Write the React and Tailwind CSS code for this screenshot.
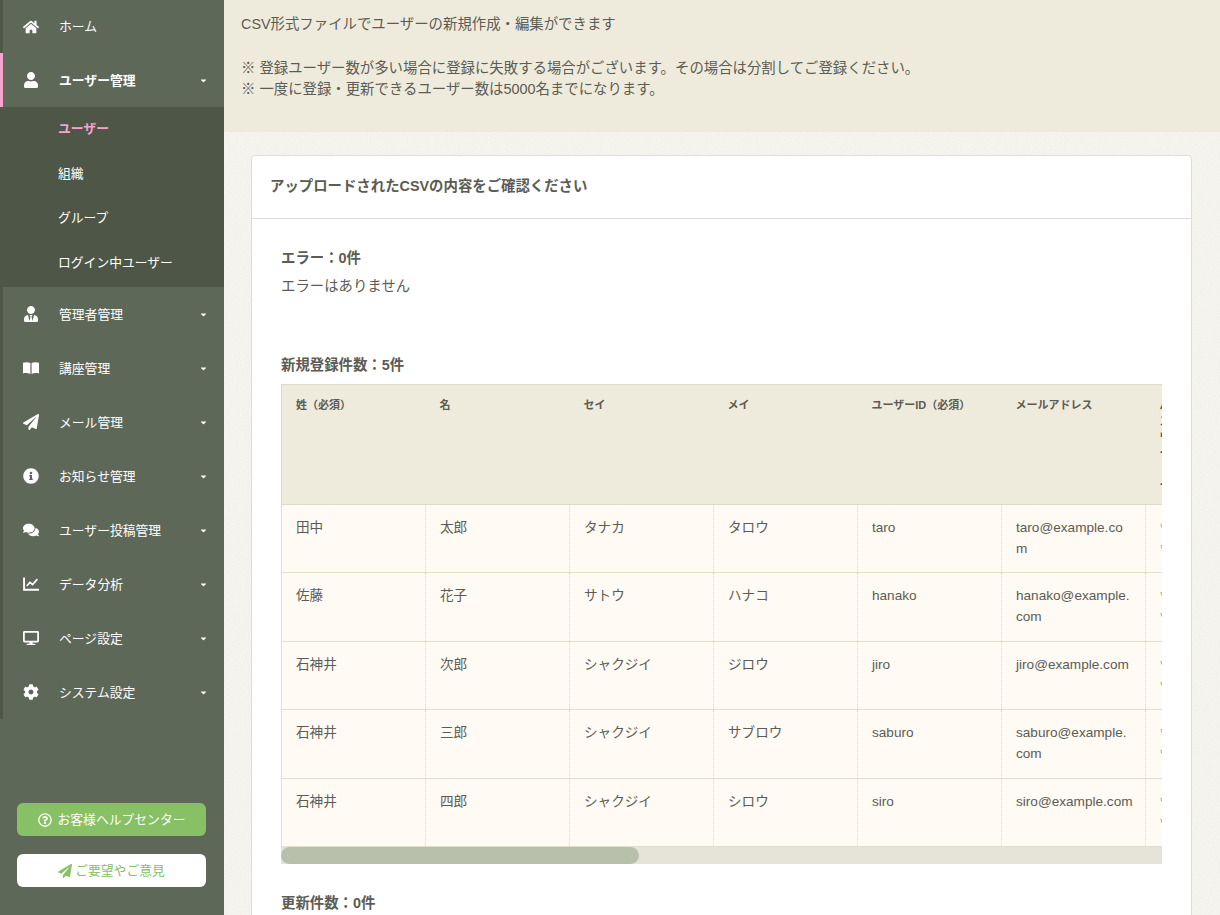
import { FaHome, FaUser, FaUserTie, FaPaperPlane, FaInfoCircle, FaComments, FaDesktop, FaCog, FaCaretDown, FaRegQuestionCircle } from 'react-icons/fa'

function BookIcon({ className }) {
  return (
    <svg viewBox="0 0 16 12" fill="currentColor" className={className}>
      <path d="M0 .8C2.5-.1 5.5 0 7.4 1v11c-2-1-4.9-1.200-7.400-.5z" />
      <path d="M16 .8C13.500-.1 10.500 0 8.600 1v11c2-1 4.900-1.200 7.400-.5z" />
    </svg>
  )
}

function ChartIcon({ className }) {
  return (
    <svg viewBox="0 0 15 13" fill="none" stroke="currentColor" className={className}>
      <path d="M1 .5V12h14" strokeWidth="1.8" />
      <path d="M3.500 8.500l3-3.500 2.500 2 4.500-5" strokeWidth="1.600" />
    </svg>
  )
}

const subMenu = ['ユーザー', '組織', 'グループ', 'ログイン中ユーザー']
const menuAfter = [
  { label: '管理者管理', icon: FaUserTie },
  { label: '講座管理', icon: BookIcon },
  { label: 'メール管理', icon: FaPaperPlane },
  { label: 'お知らせ管理', icon: FaInfoCircle },
  { label: 'ユーザー投稿管理', icon: FaComments },
  { label: 'データ分析', icon: ChartIcon },
  { label: 'ページ設定', icon: FaDesktop },
  { label: 'システム設定', icon: FaCog },
]

const columns = ['姓（必須）', '名', 'セイ', 'メイ', 'ユーザーID（必須）', 'メールアドレス']
const users = [
  ['田中', '太郎', 'タナカ', 'タロウ', 'taro', 'taro@example.com'],
  ['佐藤', '花子', 'サトウ', 'ハナコ', 'hanako', 'hanako@example.com'],
  ['石神井', '次郎', 'シャクジイ', 'ジロウ', 'jiro', 'jiro@example.com'],
  ['石神井', '三郎', 'シャクジイ', 'サブロウ', 'saburo', 'saburo@example.com'],
  ['石神井', '四郎', 'シャクジイ', 'シロウ', 'siro', 'siro@example.com'],
]

function MenuItem({ icon: Icon, label, active, caret = true, height = 'h-[54px]' }) {
  return (
    <div className={`flex items-center text-white ${height}`}>
      <span className="flex w-[56px] shrink-0 justify-center">
        <Icon className="w-[16px] text-[16px]" />
      </span>
      <span className={`text-[12.8px] ${caret ? 'pt-[2px]' : ''} ${active ? 'font-bold' : ''}`}>{label}</span>
      {caret && <FaCaretDown className="ml-auto mr-[16px] text-[9px]" />}
    </div>
  )
}

export default function App() {
  return (
    <div
      className="flex h-screen overflow-hidden text-[#5c5c54]"
      style={{ fontFamily: '"Liberation Sans", "Noto Sans CJK JP", sans-serif' }}
    >
      {/* Sidebar */}
      <aside className="flex w-[224px] shrink-0 flex-col bg-[#5e6859]">
        <nav className="border-l-[3px] border-[#4e5747]">
          <MenuItem icon={FaHome} label="ホーム" caret={false} height="h-[53px]" />
          <div className="-ml-[3px] border-l-[3px] border-[#f5a3cf]">
            <MenuItem icon={FaUser} label="ユーザー管理" active />
          </div>
          <div className="-ml-[3px] h-[180px] bg-[#4e5747] pl-[58px]">
            {subMenu.map((s, i) => (
              <div
                key={s}
                className={`flex h-[44.75px] items-center pb-[2px] text-[12.8px] ${i === 0 ? 'font-bold text-[#f5a3cf]' : 'text-white'}`}
              >
                {s}
              </div>
            ))}
          </div>
          {menuAfter.map((m) => (
            <MenuItem key={m.label} icon={m.icon} label={m.label} />
          ))}
        </nav>

        <div className="mt-auto flex flex-col gap-[18px] pb-[28px] pl-[17px] pr-[18px]">
          <div className="flex h-[33px] items-center justify-center gap-[6px] rounded-[6px] bg-[#87c065] text-[12.8px] text-white">
            <FaRegQuestionCircle className="text-[14px]" />
            お客様ヘルプセンター
          </div>
          <div className="flex h-[33px] items-center justify-center gap-[3px] rounded-[6px] bg-white text-[12.8px] text-[#87c065]">
            <FaPaperPlane className="text-[14px]" />
            ご要望やご意見
          </div>
        </div>
      </aside>

      {/* Main */}
      <main className="relative min-w-0 flex-1 bg-[#f7f5f0]">
        {/* paper texture */}
        <svg className="absolute inset-0 h-full w-full" aria-hidden="true">
          <filter id="paper">
            <feTurbulence type="fractalNoise" baseFrequency="0.9" numOctaves="2" />
            <feColorMatrix values="0 0 0 0 0.6  0 0 0 0 0.58  0 0 0 0 0.5  0 0 0 0.25 -0.07" />
          </filter>
          <rect width="100%" height="100%" filter="url(#paper)" />
        </svg>

        <div className="relative">
          <div className="h-[132px] bg-[#eeebdc] pl-[17px] pt-[14px] text-[14.4px] leading-[21px]">
            <p>CSV形式ファイルでユーザーの新規作成・編集ができます</p>
            <p className="mt-[23px]">※ 登録ユーザー数が多い場合に登録に失敗する場合がございます。その場合は分割してご登録ください。</p>
            <p>※ 一度に登録・更新できるユーザー数は5000名までになります。</p>
          </div>

          <section className="ml-[27px] mt-[23px] w-[941px] rounded-t-[4px] border border-[#dfddd5] bg-white">
            <h2 className="flex h-[63px] items-center border-b border-[#dfddd5] pl-[18px] text-[14.4px] font-bold">
              アップロードされたCSVの内容をご確認ください
            </h2>

            <div className="px-[29px] pb-[60px] pt-[29px]">
              <p className="text-[14.4px] font-bold leading-[20px]">エラー：0件</p>
              <p className="mt-[8px] text-[14.4px] leading-[21px]">エラーはありません</p>

              <p className="mt-[58px] text-[14.4px] font-bold leading-[20px]">新規登録件数：5件</p>

              <div className="mt-[9px] overflow-hidden">
                <table className="w-[1200px] table-fixed border-collapse">
                  <thead>
                    <tr className="h-[120px] bg-[#eeebdc]">
                      {columns.map((c, i) => (
                        <th
                          key={c}
                          className={`w-[144px] border-y border-[#dedbc8] px-[14px] pt-[12px] text-left align-top text-[11px] font-bold leading-[16px] ${i === 0 ? 'border-l' : ''}`}
                        >
                          {c}
                        </th>
                      ))}
                      <th className="border-y border-[#dedbc8] px-[14px] pt-[12px] text-left align-top text-[11px] font-bold leading-[16px]">
                        パ<br />ス<br />ワ<br />ー<br />ド<br />ー
                      </th>
                    </tr>
                  </thead>
                  <tbody>
                    {users.map((row) => (
                      <tr key={row[4]} className="h-[68.4px] border-b border-[#e3dfcc] bg-[#fffaf3]">
                        {row.map((cell, i) => (
                          <td
                            key={i}
                            className={`break-all border-r border-dotted border-r-[#dcd9cb] pl-[14px] pr-[12.4px] pt-[12px] align-top text-[13.6px] leading-[21px] ${i === 0 ? 'border-l border-l-[#e3dfcc] [border-left-style:solid]' : ''}`}
                          >
                            {cell}
                          </td>
                        ))}
                        <td className="px-[14px] pt-[12px] align-top text-[13.6px] leading-[21px] text-[#a08060]">
                          *<br />*
                        </td>
                      </tr>
                    ))}
                  </tbody>
                </table>
                {/* scrollbar */}
                <div className="h-[17px] bg-[#e6e3d8]">
                  <div className="h-[17px] w-[358px] rounded-full bg-[#b8c0ab]" />
                </div>
              </div>

              <p className="mt-[29px] text-[14.4px] font-bold leading-[20px]">更新件数：0件</p>
            </div>
          </section>
        </div>
      </main>
    </div>
  )
}
